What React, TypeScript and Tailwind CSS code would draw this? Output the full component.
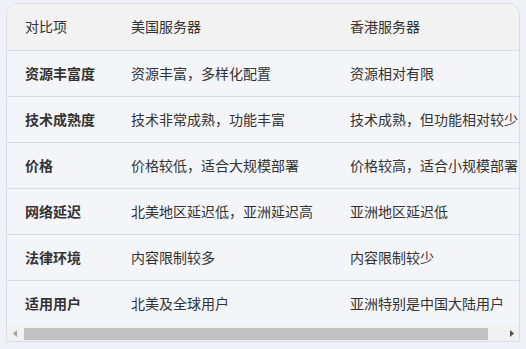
import React from "react";

const rows = [
  ["资源丰富度", "资源丰富，多样化配置", "资源相对有限"],
  ["技术成熟度", "技术非常成熟，功能丰富", "技术成熟，但功能相对较少"],
  ["价格", "价格较低，适合大规模部署", "价格较高，适合小规模部署"],
  ["网络延迟", "北美地区延迟低，亚洲延迟高", "亚洲地区延迟低"],
  ["法律环境", "内容限制较多", "内容限制较少"],
  ["适用用户", "北美及全球用户", "亚洲特别是中国大陆用户"],
];

export default function App() {
  return (
    <div
      className="w-[526px] h-[349px] bg-[#eff1f6] pt-[3px] pl-[6px]"
      style={{ fontFamily: '"Noto Sans CJK SC", "Noto Sans", sans-serif' }}
    >
      <div className="w-[514px] overflow-hidden rounded-t-xl border border-[#d8dce4] bg-[#f4f5f8]">
        <div className="overflow-hidden">
          <table className="w-[534px] table-fixed border-collapse text-[14px] text-[#333]">
            <colgroup>
              <col className="w-[123px]" />
              <col className="w-[219px]" />
              <col className="w-[192px]" />
            </colgroup>
            <thead>
              <tr className="bg-[#f2f2f2] border-b border-[#d8dce4]">
                <th className="h-[46px] pl-[18px] text-left font-normal whitespace-nowrap">对比项</th>
                <th className="h-[46px] pl-[1px] text-left font-normal whitespace-nowrap">美国服务器</th>
                <th className="h-[46px] pl-[1px] text-left font-normal whitespace-nowrap">香港服务器</th>
              </tr>
            </thead>
            <tbody>
              {rows.map((r, i) => (
                <tr
                  key={i}
                  className={i < rows.length - 1 ? "border-b border-[#d8dce4]" : ""}
                >
                  <td className="h-[46px] pl-[18px] font-bold whitespace-nowrap">{r[0]}</td>
                  <td className="h-[46px] pl-[1px] whitespace-nowrap">{r[1]}</td>
                  <td className="h-[46px] pl-[1px] whitespace-nowrap">{r[2]}</td>
                </tr>
              ))}
            </tbody>
          </table>
        </div>
        <div className="flex h-[15px] bg-[#f1f1f1]">
          <div className="flex w-[15px] items-center justify-center">
            <svg width="4" height="7" viewBox="0 0 4 7">
              <polygon points="4,0 4,7 0,3.5" fill="#a3a3a3" />
            </svg>
          </div>
          <div className="flex flex-1 items-center pl-[2px]">
            <div className="h-[12px] w-[464px] bg-[#c1c1c1]" />
          </div>
          <div className="flex w-[15px] items-center justify-center">
            <svg width="4" height="7" viewBox="0 0 4 7">
              <polygon points="0,0 0,7 4,3.5" fill="#505050" />
            </svg>
          </div>
        </div>
      </div>
    </div>
  );
}
